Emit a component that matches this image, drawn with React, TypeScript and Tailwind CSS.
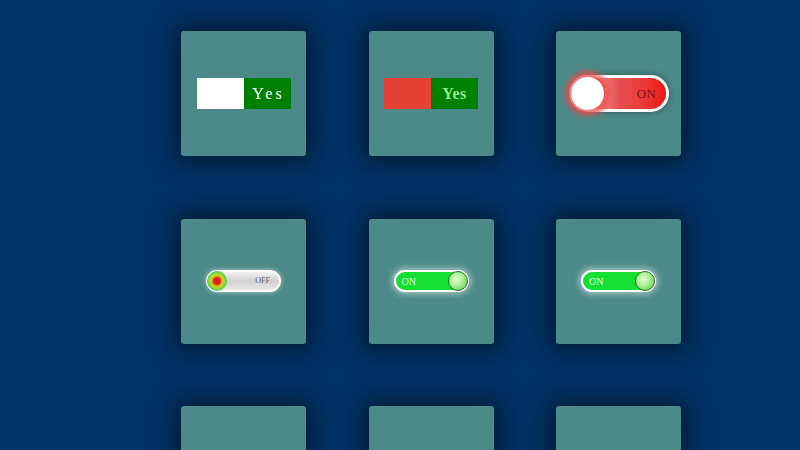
import React from 'react';

function Box({ children }: { children?: React.ReactNode }) {
  return (
    <div className="w-[125px] h-[125px] bg-[#4b8a88] rounded-[3px] shadow-[0_0_24px_6px_rgba(0,0,0,0.5)] flex items-center justify-center">
      {children}
    </div>
  );
}

function SquareSwitch({ left, textColor, bold }: { left: string; textColor: string; bold?: boolean }) {
  return (
    <div className="flex h-[31px] w-[94px]">
      <div className={`w-[47px] h-full ${left}`} />
      <div
        className={`w-[47px] h-full bg-[#008000] flex items-center justify-center text-[16px] ${textColor} ${bold ? 'font-bold tracking-[0.5px]' : 'tracking-[3px] pl-[3px]'}`}
        style={{ fontFamily: '"Liberation Serif", serif' }}
      >
        Yes
      </div>
    </div>
  );
}

function RedPill() {
  return (
    <div className="relative w-[100px] h-[37px] rounded-full border-[3px] border-white bg-gradient-to-r from-[#f3c0c0] via-[#e65050] to-[#ee1111] shadow-[0_0_6px_rgba(0,0,0,0.4)] flex items-center justify-end pr-[9px]">
      <span className="text-[13px] text-[#8a1010] tracking-[0.5px]" style={{ fontFamily: '"Liberation Serif", serif' }}>ON</span>
      <div className="absolute left-[-1px] top-[-1px] w-[33px] h-[33px] rounded-full bg-white shadow-[0_0_5px_6px_rgba(240,80,80,0.8)]" />
    </div>
  );
}

function OffPill() {
  return (
    <div className="relative w-[75px] h-[22px] rounded-full border-2 border-white bg-gradient-to-b from-[#f2f2f2] via-[#d0d0d0] to-[#e8e8e8] shadow-[0_0_5px_rgba(255,255,255,0.6)] flex items-center justify-end pr-[9px]">
      <span className="text-[8px] text-[#666]" style={{ fontFamily: '"Liberation Serif", serif' }}>OFF</span>
      <div className="absolute left-[-1px] top-[-1px] w-[20px] h-[20px] rounded-full bg-[radial-gradient(circle,#e01e1e_0%,#e01e1e_20%,#d8d820_42%,#40d060_70%,#50c8d8_100%)]" />
    </div>
  );
}

function OnPill() {
  return (
    <div className="relative w-[75px] h-[22px] rounded-full border-2 border-white bg-[#14e032] shadow-[0_0_6px_2px_rgba(255,255,255,0.5)] flex items-center pl-[6px]">
      <span className="text-[10px] text-[#e8ffe8]" style={{ fontFamily: '"Liberation Serif", serif' }}>ON</span>
      <div className="absolute right-[-1px] top-[-1px] w-[20px] h-[20px] rounded-full border border-[#2b6b2b] bg-[radial-gradient(circle_at_40%_40%,#e0ffd0_0%,#a8f090_45%,#4cc83c_100%)]" />
    </div>
  );
}

export default function App() {
  return (
    <div className="w-[800px] h-[450px] overflow-hidden bg-[#003366]">
      <div className="grid grid-cols-[125px_125px_125px] gap-x-[62.5px] gap-y-[62.5px] pl-[181px] pt-[31px]">
        <Box><SquareSwitch left="bg-white" textColor="text-white" /></Box>
        <Box><SquareSwitch left="bg-[#e34234]" textColor="text-[#90ee90]" bold /></Box>
        <Box><RedPill /></Box>
        <Box><OffPill /></Box>
        <Box><OnPill /></Box>
        <Box><OnPill /></Box>
        <Box />
        <Box />
        <Box />
      </div>
    </div>
  );
}
